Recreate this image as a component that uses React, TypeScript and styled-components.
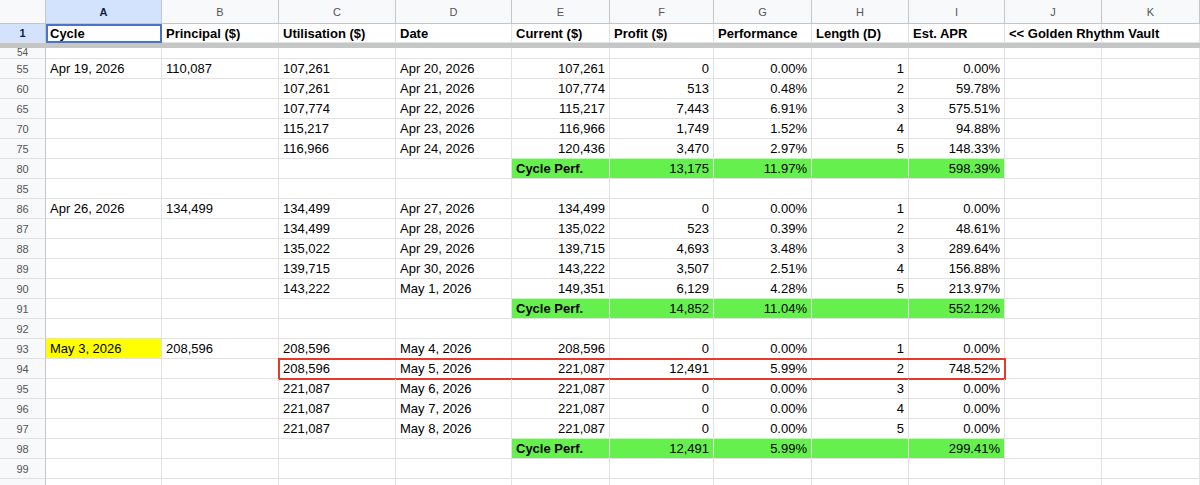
import styled, { createGlobalStyle } from 'styled-components';

const GlobalStyle = createGlobalStyle`
  body {
    margin: 0;
    background: #fff;
    font-family: Arial, "Liberation Sans", sans-serif;
    overflow: hidden;
  }
`;

const COLS = '46px 116px 117px 117px 116px 98px 104px 98px 97px 96px 97px 98px';

const Sheet = styled.div`
  width: 1200px;
  height: 485px;
  overflow: hidden;
`;

const Row = styled.div<{ $h: number }>`
  position: relative;
  display: grid;
  grid-template-columns: ${COLS};
  height: ${({ $h }) => $h}px;
`;

const Cell = styled.div<{ $right?: boolean; $bold?: boolean; $bg?: string; $sel?: boolean; $clip?: boolean }>`
  box-sizing: border-box;
  border-right: 1px solid #e1e1e1;
  border-bottom: 1px solid #e1e1e1;
  padding: 0 4px;
  font-size: 13px;
  color: #000;
  display: flex;
  align-items: center;
  justify-content: ${({ $right }) => ($right ? 'flex-end' : 'flex-start')};
  font-weight: ${({ $bold }) => ($bold ? 700 : 400)};
  background: ${({ $bg }) => $bg || 'transparent'};
  white-space: nowrap;
  overflow: ${({ $clip }) => ($clip ? 'hidden' : 'visible')};
  ${({ $sel }) => ($sel ? 'outline: 2px solid #4a74c9; outline-offset: -2px;' : '')}
`;

const RowNum = styled.div<{ $active?: boolean; $cut?: boolean }>`
  box-sizing: border-box;
  background: ${({ $active }) => ($active ? '#d3e3fd' : '#f8f9fa')};
  border-right: 1px solid #c4c7c5;
  border-bottom: 1px solid #e1e1e1;
  font-size: ${({ $cut }) => ($cut ? 10 : 11)}px;
  color: ${({ $active }) => ($active ? '#0b1f4a' : '#555')};
  font-weight: ${({ $active }) => ($active ? 700 : 400)};
  display: flex;
  align-items: ${({ $cut }) => ($cut ? 'flex-end' : 'center')};
  justify-content: center;
  overflow: hidden;
`;

const ColHead = styled.div<{ $active?: boolean }>`
  box-sizing: border-box;
  background: ${({ $active }) => ($active ? '#d3e3fd' : '#f8f9fa')};
  border-right: 1px solid #c4c7c5;
  border-bottom: 1px solid #c4c7c5;
  font-size: 11px;
  color: ${({ $active }) => ($active ? '#0b1f4a' : '#555')};
  font-weight: ${({ $active }) => ($active ? 700 : 400)};
  display: flex;
  align-items: center;
  justify-content: center;
`;

const Freeze = styled.div`
  height: 5px;
  background: #c4c7c5;
`;

/* red annotation box drawn over row 94, columns C..I */
const Highlight = styled.div`
  position: absolute;
  left: 278px;
  width: 728px;
  top: -1px;
  bottom: -1px;
  box-sizing: border-box;
  border: 2px solid #e8392b;
  pointer-events: none;
`;

const GREEN = '#65f04e';
const YELLOW = '#ffff00';

type R = { n: string; a?: string; b?: string; c?: string; d?: string; e?: string; f?: string; g?: string; h?: string; i?: string; perf?: boolean; yellow?: boolean; box?: boolean };

const rows: R[] = [
  { n: '55', a: 'Apr 19, 2026', b: '110,087', c: '107,261', d: 'Apr 20, 2026', e: '107,261', f: '0', g: '0.00%', h: '1', i: '0.00%' },
  { n: '60', c: '107,261', d: 'Apr 21, 2026', e: '107,774', f: '513', g: '0.48%', h: '2', i: '59.78%' },
  { n: '65', c: '107,774', d: 'Apr 22, 2026', e: '115,217', f: '7,443', g: '6.91%', h: '3', i: '575.51%' },
  { n: '70', c: '115,217', d: 'Apr 23, 2026', e: '116,966', f: '1,749', g: '1.52%', h: '4', i: '94.88%' },
  { n: '75', c: '116,966', d: 'Apr 24, 2026', e: '120,436', f: '3,470', g: '2.97%', h: '5', i: '148.33%' },
  { n: '80', perf: true, f: '13,175', g: '11.97%', i: '598.39%' },
  { n: '85' },
  { n: '86', a: 'Apr 26, 2026', b: '134,499', c: '134,499', d: 'Apr 27, 2026', e: '134,499', f: '0', g: '0.00%', h: '1', i: '0.00%' },
  { n: '87', c: '134,499', d: 'Apr 28, 2026', e: '135,022', f: '523', g: '0.39%', h: '2', i: '48.61%' },
  { n: '88', c: '135,022', d: 'Apr 29, 2026', e: '139,715', f: '4,693', g: '3.48%', h: '3', i: '289.64%' },
  { n: '89', c: '139,715', d: 'Apr 30, 2026', e: '143,222', f: '3,507', g: '2.51%', h: '4', i: '156.88%' },
  { n: '90', c: '143,222', d: 'May 1, 2026', e: '149,351', f: '6,129', g: '4.28%', h: '5', i: '213.97%' },
  { n: '91', perf: true, f: '14,852', g: '11.04%', i: '552.12%' },
  { n: '92' },
  { n: '93', a: 'May 3, 2026', yellow: true, b: '208,596', c: '208,596', d: 'May 4, 2026', e: '208,596', f: '0', g: '0.00%', h: '1', i: '0.00%' },
  { n: '94', box: true, c: '208,596', d: 'May 5, 2026', e: '221,087', f: '12,491', g: '5.99%', h: '2', i: '748.52%' },
  { n: '95', c: '221,087', d: 'May 6, 2026', e: '221,087', f: '0', g: '0.00%', h: '3', i: '0.00%' },
  { n: '96', c: '221,087', d: 'May 7, 2026', e: '221,087', f: '0', g: '0.00%', h: '4', i: '0.00%' },
  { n: '97', c: '221,087', d: 'May 8, 2026', e: '221,087', f: '0', g: '0.00%', h: '5', i: '0.00%' },
  { n: '98', perf: true, f: '12,491', g: '5.99%', i: '299.41%' },
  { n: '99' },
  { n: '100' },
];

const letters = ['A', 'B', 'C', 'D', 'E', 'F', 'G', 'H', 'I', 'J', 'K'];
const heads = ['Cycle', 'Principal ($)', 'Utilisation ($)', 'Date', 'Current ($)', 'Profit ($)', 'Performance', 'Length (D)', 'Est. APR', '<< Golden Rhythm Vault', ''];

const DataRow = ({ r }: { r: R }) => {
  const g = r.perf ? GREEN : undefined;
  return (
    <Row $h={20}>
      <RowNum>{r.n}</RowNum>
      <Cell $bg={r.yellow ? YELLOW : undefined}>{r.a}</Cell>
      <Cell>{r.b}</Cell>
      <Cell>{r.c}</Cell>
      <Cell>{r.d}</Cell>
      {r.perf ? <Cell $bold $bg={g}>Cycle Perf.</Cell> : <Cell $right>{r.e}</Cell>}
      <Cell $right $bg={g}>{r.f}</Cell>
      <Cell $right $bg={g}>{r.g}</Cell>
      <Cell $right $bg={g}>{r.h}</Cell>
      <Cell $right $bg={g}>{r.i}</Cell>
      <Cell />
      <Cell />
      {r.box && <Highlight />}
    </Row>
  );
};

export default function App() {
  return (
    <Sheet>
      <GlobalStyle />
      <Row $h={24}>
        <ColHead />
        {letters.map((l) => (
          <ColHead key={l} $active={l === 'A'}>{l}</ColHead>
        ))}
      </Row>
      <Row $h={19}>
        <RowNum $active>1</RowNum>
        {heads.map((h, i) => (
          <Cell key={i} $bold $sel={i === 0} $clip={i !== 9}>{h}</Cell>
        ))}
      </Row>
      <Freeze />
      <Row $h={11}>
        <RowNum $cut>54</RowNum>
        {letters.map((l) => (
          <Cell key={l} />
        ))}
      </Row>
      {rows.map((r) => (
        <DataRow key={r.n} r={r} />
      ))}
    </Sheet>
  );
}
